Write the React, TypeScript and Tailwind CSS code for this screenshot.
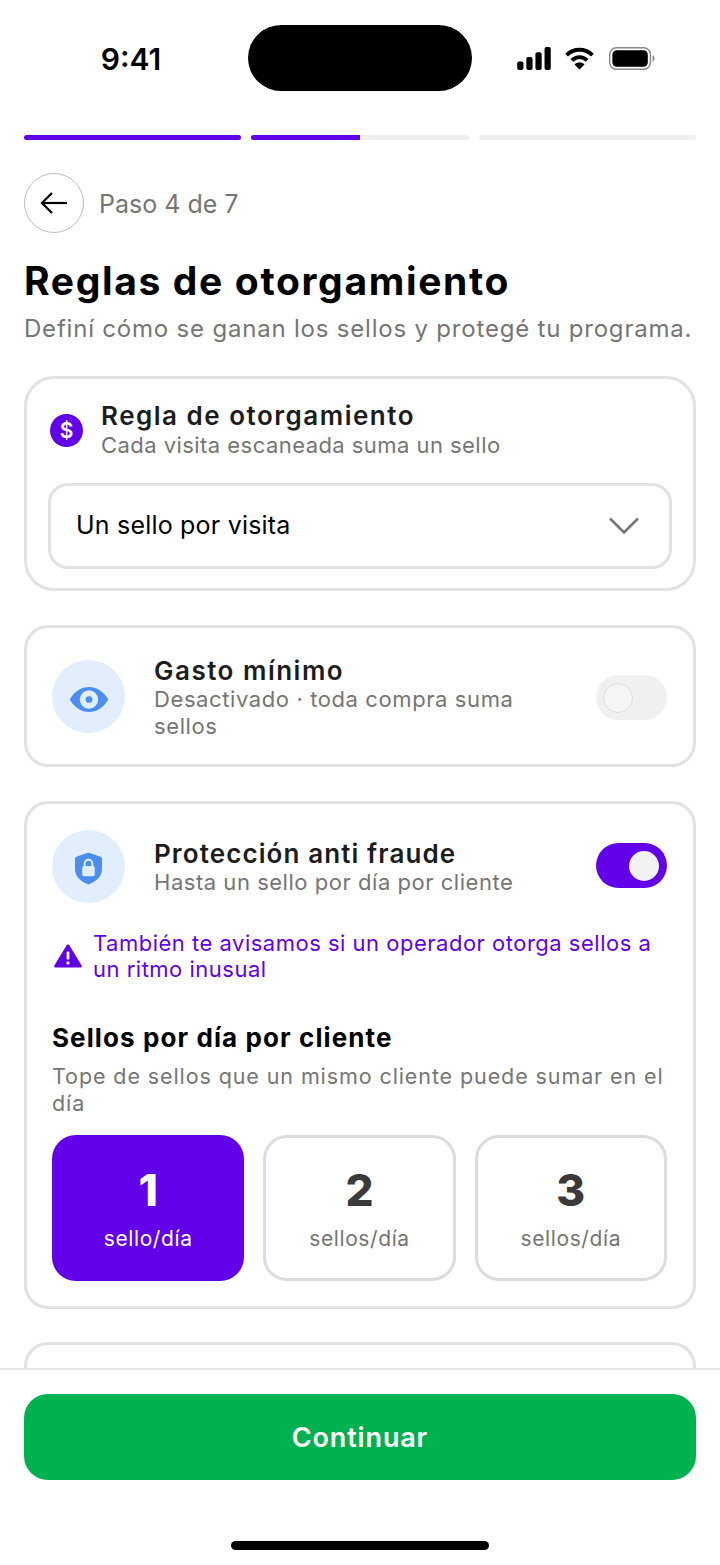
const font = "font-['Inter','Liberation_Sans',sans-serif]";

function Toggle({ on }: { on: boolean }) {
  return (
    <div
      className={
        on
          ? "flex h-[45px] w-[71px] shrink-0 items-center justify-end rounded-full bg-[#6200ea] px-[8px]"
          : "flex h-[45px] w-[71px] shrink-0 items-center justify-start rounded-full bg-[#f0f0f0] px-[7px]"
      }
    >
      <div
        className={
          on
            ? "h-[30px] w-[30px] rounded-full bg-[#f2f2f2]"
            : "h-[30px] w-[30px] rounded-full border border-[#dcdcdc] bg-[#f5f5f5]"
        }
      />
    </div>
  );
}

function IconCircle({ children }: { children: React.ReactNode }) {
  return (
    <div className="flex h-[73px] w-[73px] shrink-0 items-center justify-center rounded-full bg-[#e3eefd]">
      {children}
    </div>
  );
}

function DayOption({ n, label, active }: { n: string; label: string; active?: boolean }) {
  return (
    <div
      className={
        active
          ? "flex h-[146px] flex-col items-center rounded-[24px] bg-[#6200ea] pt-[27px] text-white"
          : "flex h-[146px] flex-col items-center rounded-[24px] border-[3px] border-[#dcdcdc] bg-white pt-[24px] text-[#3a3a3a]"
      }
    >
      <div className="text-[44px] font-extrabold leading-[56px]">{n}</div>
      <div
        className={
          active
            ? "mt-[7px] text-[21px] leading-[28px] tracking-[0.6px]"
            : "mt-[7px] text-[21px] leading-[28px] tracking-[0.6px] text-[#757575]"
        }
      >
        {label}
      </div>
    </div>
  );
}

export default function App() {
  return (
    <div className={`${font} flex h-[1565px] w-[720px] flex-col overflow-hidden bg-white text-[#1c1c1c]`}>
      {/* status bar */}
      <div className="flex h-[135px] shrink-0 items-start">
        <div className="flex w-[248px] justify-center pl-[14px] pt-[40px] text-[30px] font-semibold leading-[38px] text-black">
          9:41
        </div>
        <div className="mt-[25px] h-[66px] w-[224px] rounded-[33px] bg-black" />
        <div className="flex items-center gap-[14px] pl-[45px] pt-[47px]">
          <svg width="34" height="23" viewBox="0 0 35 24" fill="black">
            <rect x="0" y="15" width="6.5" height="9" rx="2" />
            <rect x="9.5" y="10.5" width="6.5" height="13.5" rx="2" />
            <rect x="19" y="5.5" width="6.5" height="18.5" rx="2" />
            <rect x="28.5" y="0" width="6.5" height="24" rx="2" />
          </svg>
          <svg width="29" height="23" viewBox="0 0 30 24" fill="none" stroke="black" strokeWidth="4">
            <path d="M1.5 8.5C9 1 21 1 28.5 8.5" />
            <path d="M7 14C11.5 9.5 18.5 9.5 23 14" />
            <path d="M15 23.5L9.8 18.3C12.6 15.6 17.4 15.6 20.2 18.3Z" fill="black" stroke="none" />
          </svg>
          <svg width="48" height="23" viewBox="0 0 48 24">
            <rect x="0.75" y="0.75" width="42.5" height="22.5" rx="7" fill="none" stroke="#8a8a8a" strokeWidth="1.5" />
            <rect x="3.5" y="3.5" width="37" height="17" rx="4.5" fill="black" />
            <path d="M45.5 8.5C47 9 47.5 10.5 47.5 12C47.5 13.5 47 15 45.5 15.5Z" fill="#8a8a8a" />
          </svg>
        </div>
      </div>

      <main className="min-h-0 flex-1 overflow-hidden px-[24px]">
        {/* progress */}
        <div className="flex h-[5px] gap-[10px]">
          <div className="flex-1 rounded-full bg-[#6200ea]" />
          <div className="flex-1 overflow-hidden rounded-full bg-[#f0f0f0]">
            <div className="h-full w-1/2 bg-[#6200ea]" />
          </div>
          <div className="flex-1 rounded-full bg-[#f0f0f0]" />
        </div>

        {/* back row */}
        <div className="mt-[33px] flex items-center gap-[15px]">
          <div className="flex h-[60px] w-[60px] items-center justify-center rounded-full border border-[#bdbdbd]">
            <svg width="28" height="22" viewBox="0 0 28 22" fill="none" stroke="#000" strokeWidth="2.2">
              <path d="M27 11H2" />
              <path d="M12 1L2 11L12 21" />
            </svg>
          </div>
          <div className="pt-[2px] text-[25px] leading-[32px] text-[#757575]">Paso 4 de 7</div>
        </div>

        <h1 className="mt-[25px] whitespace-nowrap text-[39px] font-bold leading-[46px] tracking-[1.65px] text-black">
          Reglas de otorgamiento
        </h1>
        <p className="mt-[9px] whitespace-nowrap text-[24px] leading-[32px] tracking-[0.8px] text-[#757575]">
          Definí cómo se ganan los sellos y protegé tu programa.
        </p>

        {/* regla */}
        <section className="mt-[31px] h-[215px] rounded-[30px] border-[3px] border-[#e2e2e2] px-[21px] pt-[22px]">
          <div className="flex items-center gap-[18px]">
            <div className="ml-[2px] flex h-[33px] w-[33px] shrink-0 items-center justify-center rounded-full bg-[#6200ea] text-[21px] font-semibold leading-none text-white">
              $
            </div>
            <div>
              <div className="text-[26px] font-semibold leading-[30px] tracking-[1.5px]">Regla de otorgamiento</div>
              <div className="text-[22px] leading-[28px] tracking-[0.45px] text-[#757575]">
                Cada visita escaneada suma un sello
              </div>
            </div>
          </div>
          <div className="mt-[24px] flex h-[86px] items-center justify-between rounded-[20px] border-[3px] border-[#e2e2e2] pl-[25px] pr-[30px]">
            <span className="text-[25px] tracking-[0.2px] text-black">Un sello por visita</span>
            <svg width="30" height="18" viewBox="0 0 30 18" fill="none" stroke="#757575" strokeWidth="2.6">
              <path d="M1 1.5L15 15.5L29 1.5" />
            </svg>
          </div>
        </section>

        {/* gasto */}
        <section className="mt-[34px] flex h-[142px] items-start rounded-[24px] border-[3px] border-[#e2e2e2] pl-[25px] pr-[26px] pt-[32px]">
          <IconCircle>
            <svg width="40" height="25" viewBox="0 0 40 26" className="mt-[6px]">
              <path d="M0 13C5 4.5 12 0 20 0C28 0 35 4.5 40 13C35 21.5 28 26 20 26C12 26 5 21.5 0 13Z" fill="#4a8ff0" />
              <circle cx="20" cy="13" r="9.5" fill="#e3eefd" />
              <circle cx="20" cy="13" r="3.5" fill="#4a8ff0" />
            </svg>
          </IconCircle>
          <div className="ml-[29px] w-[385px] shrink-0">
            <div className="mt-[-4px] text-[26px] font-semibold leading-[30px] tracking-[1.5px]">Gasto mínimo</div>
            <div className="text-[22px] leading-[27px] tracking-[0.6px] text-[#757575]">
              Desactivado · toda compra suma sellos
            </div>
          </div>
          <div className="ml-auto mt-[15px]">
            <Toggle on={false} />
          </div>
        </section>

        {/* proteccion */}
        <section className="mt-[34px] h-[508px] rounded-[24px] border-[3px] border-[#e2e2e2] pl-[25px] pr-[26px] pt-[26px]">
          <div className="flex items-start">
            <IconCircle>
              <svg width="27" height="33" viewBox="0 0 28 33" className="mt-[3px]">
                <path
                  d="M12.5 0.5C13.5 0.2 14.5 0.2 15.5 0.5L26 4C27.2 4.4 28 5.5 28 6.8V17C28 25 22 30 14 33C6 30 0 25 0 17V6.8C0 5.5 0.8 4.4 2 4Z"
                  fill="#4a8ff0"
                />
                <rect x="7.5" y="14" width="13" height="10.5" rx="2" fill="#e3eefd" />
                <path d="M10 14.5V11.5C10 9 12 7.5 14 7.5C16 7.5 18 9 18 11.5V14.5" fill="none" stroke="#e3eefd" strokeWidth="2" />
              </svg>
            </IconCircle>
            <div className="ml-[29px] w-[385px] shrink-0 pt-[8px]">
              <div className="text-[26px] font-semibold leading-[31px] tracking-[1.1px]">Protección anti fraude</div>
              <div className="text-[22px] leading-[27px] tracking-[0.53px] text-[#757575]">
                Hasta un sello por día por cliente
              </div>
            </div>
            <div className="ml-auto mt-[13px]">
              <Toggle on />
            </div>
          </div>

          <div className="mt-[27px] flex items-center gap-[11px] text-[#6200ea]">
            <svg width="28" height="24" viewBox="0 0 30 26" className="ml-[2px] shrink-0">
              <path d="M15 2L28.5 24H1.5Z" fill="#6200ea" stroke="#6200ea" strokeWidth="3" strokeLinejoin="round" />
              <rect x="13.5" y="8" width="3" height="9" rx="1.5" fill="#fff" />
              <circle cx="15" cy="20.5" r="1.8" fill="#fff" />
            </svg>
            <p className="text-[22px] leading-[26px] tracking-[0.5px]">
              También te avisamos si un operador otorga sellos a un ritmo inusual
            </p>
          </div>

          <div className="mt-[40px] text-[26px] font-bold leading-[32px] tracking-[1.1px] text-black">
            Sellos por día por cliente
          </div>
          <p className="mt-[9px] text-[21.5px] leading-[27px] tracking-[0.9px] text-[#757575]">
            Tope de sellos que un mismo cliente puede sumar en el día
          </p>
          <div className="mt-[18px] grid grid-cols-3 gap-[19px]">
            <DayOption n="1" label="sello/día" active />
            <DayOption n="2" label="sellos/día" />
            <DayOption n="3" label="sellos/día" />
          </div>
        </section>

        {/* next card, cut off by the footer */}
        <section className="mt-[33px] h-[200px] rounded-[24px] border-[3px] border-[#e2e2e2]" />
      </main>

      <footer className="h-[197px] shrink-0 border-t-2 border-[#e6e6e6] bg-white px-[24px] pt-[24px]">
        <div className="flex h-[86px] items-center justify-center rounded-[24px] bg-[#00b14f] pt-[2px] text-[27px] font-semibold tracking-[0.85px] text-white">
          Continuar
        </div>
        <div className="mx-auto mt-[61px] h-[9px] w-[258px] rounded-full bg-black" />
      </footer>
    </div>
  );
}
